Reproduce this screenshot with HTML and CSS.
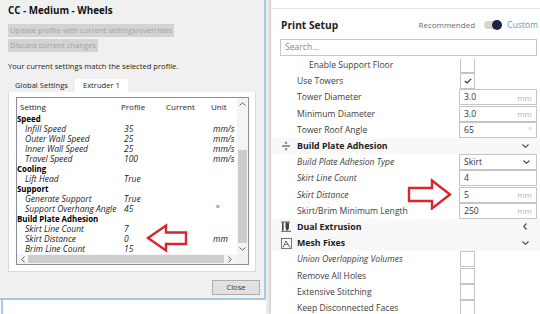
FILE: index.html
```html
<!DOCTYPE html>
<html>
<head>
<meta charset="utf-8">
<link rel="stylesheet" href="styles.css">
</head>
<body>
<div class="screen">
  <div class="left">
    <div class="dlg">
      <div class="title">CC - Medium - Wheels</div>
      <div class="btn btn-wide">Update profile with current settings/overrides</div>
      <div class="btn btn-narrow">Discard current changes</div>
      <div class="msg">Your current settings match the selected profile.</div>
      <div class="tabs">
        <div class="tab">Global Settings</div>
        <div class="tab active">Extruder 1</div>
      </div>
      <div class="tabpanel">
        <div class="table">
          <div class="tmain">
            <div class="thead">
              <span>Setting</span><span>Profile</span><span>Current</span><span>Unit</span>
            </div>
            <div class="tbody">
              <div class="cat">Speed</div>
              <div class="trow"><span>Infill Speed</span><span>35</span><span>mm/s</span></div>
              <div class="trow"><span>Outer Wall Speed</span><span>25</span><span>mm/s</span></div>
              <div class="trow"><span>Inner Wall Speed</span><span>25</span><span>mm/s</span></div>
              <div class="trow"><span>Travel Speed</span><span>100</span><span>mm/s</span></div>
              <div class="cat">Cooling</div>
              <div class="trow"><span>Lift Head</span><span>True</span><span></span></div>
              <div class="cat">Support</div>
              <div class="trow"><span>Generate Support</span><span>True</span><span></span></div>
              <div class="trow"><span>Support Overhang Angle</span><span>45</span><span class="deg">°</span></div>
              <div class="cat">Build Plate Adhesion</div>
              <div class="trow"><span>Skirt Line Count</span><span>7</span><span></span></div>
              <div class="trow"><span>Skirt Distance</span><span>0</span><span>mm</span></div>
              <div class="trow"><span>Brim Line Count</span><span>15</span><span></span></div>
            </div>
          </div>
          <div class="vscroll">
            <div class="sbtn"><svg width="7" height="4" viewBox="0 0 7 4"><polyline points="0.5,3.5 3.5,0.8 6.5,3.5" fill="none" stroke="#606060" stroke-width="1"/></svg></div>
            <div class="vtrack"><div class="vthumb"></div></div>
            <div class="sbtn"><svg width="7" height="4" viewBox="0 0 7 4"><polyline points="0.5,0.5 3.5,3.2 6.5,0.5" fill="none" stroke="#606060" stroke-width="1"/></svg></div>
          </div>
          <div class="hscroll">
            <div class="sbtn h"><svg width="4" height="7" viewBox="0 0 4 7"><polyline points="3.5,0.5 0.8,3.5 3.5,6.5" fill="none" stroke="#606060" stroke-width="1"/></svg></div>
            <div class="hthumb"></div>
            <div class="sbtn h"><svg width="4" height="7" viewBox="0 0 4 7"><polyline points="0.5,0.5 3.2,3.5 0.5,6.5" fill="none" stroke="#606060" stroke-width="1"/></svg></div>
          </div>
          <div class="corner"></div>
        </div>
      </div>
      <div class="footer"><div class="close">Close</div></div>
    </div>
    <div class="below"></div>
  </div>

  <div class="right">
    <div class="panel">
      <div class="topband"></div>
      <div class="ps-head">
        <div class="ps-title">Print Setup</div>
        <div class="mode">
          <span class="rec">Recommended</span>
          <span class="toggle"><span class="knob"></span></span>
          <span class="custom">Custom</span>
        </div>
      </div>
      <div class="search">Search...</div>
      <div class="list">
        <div class="list-inner">
          <div class="row"><span class="label sub">Enable Support Floor</span><span class="check"></span></div>
          <div class="row"><span class="label">Use Towers</span><span class="check"><svg width="8" height="6" viewBox="0 0 8 6"><polyline points="0.8,3 3,5 7.2,0.8" fill="none" stroke="#333" stroke-width="1.2"/></svg></span></div>
          <div class="row"><span class="label">Tower Diameter</span><span class="field"><span>3.0</span><span class="unit">mm</span></span></div>
          <div class="row"><span class="label">Minimum Diameter</span><span class="field"><span>3.0</span><span class="unit">mm</span></span></div>
          <div class="row"><span class="label">Tower Roof Angle</span><span class="field"><span>65</span><span class="unit">°</span></span></div>
          <div class="row cat-row">
            <span class="cicon"><svg width="10" height="10" viewBox="0 0 10 10"><line x1="1" y1="5" x2="9" y2="5" stroke="#555" stroke-width="1.2"/><line x1="5" y1="0.5" x2="5" y2="3" stroke="#555" stroke-width="1"/><line x1="5" y1="7" x2="5" y2="9.5" stroke="#555" stroke-width="1"/><line x1="3.5" y1="2" x2="6.5" y2="2" stroke="#777" stroke-width="0.6"/><line x1="3.5" y1="8" x2="6.5" y2="8" stroke="#777" stroke-width="0.6"/></svg></span>
            <span class="label bold">Build Plate Adhesion</span>
            <span class="chev"><svg width="7" height="4" viewBox="0 0 7 4"><polyline points="0.5,0.5 3.5,3.3 6.5,0.5" fill="none" stroke="#444" stroke-width="1.1"/></svg></span>
          </div>
          <div class="row"><span class="label it">Build Plate Adhesion Type</span><span class="field select"><span>Skirt</span><svg width="7" height="4" viewBox="0 0 7 4"><polyline points="0.5,0.5 3.5,3.3 6.5,0.5" fill="none" stroke="#444" stroke-width="1.1"/></svg></span></div>
          <div class="row"><span class="label it">Skirt Line Count</span><span class="field"><span>4</span></span></div>
          <div class="row"><span class="label it">Skirt Distance</span><span class="field"><span>5</span><span class="unit">mm</span></span></div>
          <div class="row"><span class="label">Skirt/Brim Minimum Length</span><span class="field"><span>250</span><span class="unit">mm</span></span></div>
          <div class="row cat-row">
            <span class="cicon"><svg width="10" height="11" viewBox="0 0 10 11"><rect x="1" y="1.5" width="1.6" height="8" fill="#444"/><path d="M4.5 1.5 H8 V7 L7 9.5 H5.5 L4.5 7 Z" fill="#444"/><line x1="0" y1="10.3" x2="10" y2="10.3" stroke="#444" stroke-width="0.9"/><line x1="0" y1="1" x2="9" y2="1" stroke="#444" stroke-width="0.9"/></svg></span>
            <span class="label bold">Dual Extrusion</span>
            <span class="chev"><svg width="4" height="7" viewBox="0 0 4 7"><polyline points="3.5,0.5 0.7,3.5 3.5,6.5" fill="none" stroke="#444" stroke-width="1.1"/></svg></span>
          </div>
          <div class="row cat-row">
            <span class="cicon"><svg width="11" height="11" viewBox="0 0 11 11"><rect x="0.5" y="0.5" width="10" height="10" fill="none" stroke="#555" stroke-width="0.8"/><polyline points="2,9.5 5,3 9,9.5" fill="none" stroke="#555" stroke-width="0.9"/><line x1="3.3" y1="6.5" x2="7.3" y2="6.5" stroke="#555" stroke-width="0.7"/></svg></span>
            <span class="label bold">Mesh Fixes</span>
            <span class="chev"><svg width="7" height="4" viewBox="0 0 7 4"><polyline points="0.5,0.5 3.5,3.3 6.5,0.5" fill="none" stroke="#444" stroke-width="1.1"/></svg></span>
          </div>
          <div class="row"><span class="label it">Union Overlapping Volumes</span><span class="check"></span></div>
          <div class="row"><span class="label">Remove All Holes</span><span class="check"></span></div>
          <div class="row"><span class="label">Extensive Stitching</span><span class="check"></span></div>
          <div class="row"><span class="label">Keep Disconnected Faces</span><span class="check"></span></div>
        </div>
      </div>
    </div>
  </div>

  <svg class="arrow arrow-left" width="44" height="30" viewBox="145 223 44 30">
    <polygon points="148,238 166,225.5 166,232.5 186,232.5 186,244 166,244 166,250.5" fill="none" stroke="#d8262c" stroke-width="2.4" stroke-linejoin="miter"/>
  </svg>
  <svg class="arrow arrow-right" width="46" height="32" viewBox="406 178 46 32">
    <polygon points="450,194.5 432,180.5 432,188 409,188 409,201 432,201 432,208.5" fill="none" stroke="#d8262c" stroke-width="2.4" stroke-linejoin="miter"/>
  </svg>
</div>
</body>
</html>
```

FILE: styles.css
```css
* { box-sizing: border-box; }
html, body { margin: 0; padding: 0; }
body { width: 540px; height: 314px; overflow: hidden; background: #fff; }

.screen {
  position: relative;
  width: 540px;
  height: 314px;
  display: flex;
  font-family: "Open Sans", "DejaVu Sans", sans-serif;
}

/* ---------- left dialog ---------- */
.left { width: 266px; display: flex; flex-direction: column; }
.dlg {
  width: 266px;
  height: 300px;
  background: #f0f0f0;
  border-right: 2px solid #a8cbe4;
  border-bottom: 2px solid #a8cbe4;
  display: flex;
  flex-direction: column;
  align-items: flex-start;
  padding: 0 0 0 8px;
  font-size: 7.6px;
  color: #1a1a1a;
}
.below { flex: 1; background: #fff; border-left: 2px solid #a8cbe4; margin-left: 1px; }

.title { margin-top: 4px; height: 13px; line-height: 13px; font-weight: 700; font-size: 9.8px; color: #111; }
.btn {
  background: #d3d3d3;
  color: #a3a3a3;
  height: 13px;
  line-height: 13px;
  padding: 0 2px;
  white-space: nowrap;
}
.btn-wide { margin-top: 7px; }
.btn-narrow { margin-top: 2px; }
.msg { margin-top: 8px; height: 13px; line-height: 13px; }

.tabs { margin-top: 6px; height: 13px; display: flex; }
.tab { height: 13px; line-height: 13px; padding: 0 7px; color: #222; }
.tab.active { background: #fff; padding: 0 8px; }

.tabpanel {
  width: 248px;
  height: 180px;
  background: #fff;
  border: 1px solid #dadada;
  border-top: none;
  padding: 5px 0 0 7px;
}

.table {
  width: 233px;
  height: 168px;
  border: 1px solid #8a8f97;
  display: grid;
  grid-template-columns: 220px 11px;
  grid-template-rows: 156px 10px;
  font-size: 8px;
  background: #fff;
}
.tmain { overflow: hidden; }
.thead {
  height: 16px;
  display: grid;
  grid-template-columns: 101px 45px 45px 30px;
  align-items: center;
  padding-left: 3px;
  color: #222;
}
.tbody { height: 140px; overflow: hidden; }
.cat { height: 10px; line-height: 10px; font-weight: 700; color: #000; font-size: 7.9px; }
.trow {
  height: 10px;
  line-height: 10px;
  display: grid;
  grid-template-columns: 107px 89px 24px;
  font-style: italic;
  font-size: 8.5px;
  color: #1a1a1a;
}
.trow span:first-child { padding-left: 8px; white-space: nowrap; }
.trow .deg { padding-left: 3px; }

.vscroll { grid-row: 1; grid-column: 2; background: #f4f4f4; display: flex; flex-direction: column; }
.sbtn { height: 11px; display: flex; align-items: center; justify-content: center; flex: none; }
.vtrack { flex: 1; display: flex; flex-direction: column; justify-content: flex-end; }
.vthumb { height: 93px; margin: 0 1px; background: #cdcdcd; }
.hscroll { grid-row: 2; grid-column: 1; background: #f4f4f4; display: flex; align-items: center; }
.sbtn.h { width: 11px; height: 10px; }
.hthumb { width: 196px; height: 8px; background: #cdcdcd; }
.corner { grid-row: 2; grid-column: 2; background: #f0f0f0; }

.footer { align-self: stretch; display: flex; justify-content: flex-end; padding: 8px 4px 0 0; }
.close {
  width: 48px;
  height: 15px;
  line-height: 13px;
  text-align: center;
  background: #e1e1e1;
  border: 1px solid #adadad;
  color: #333;
  font-size: 7.6px;
}

/* ---------- right panel ---------- */
.right { flex: 1; background: #ededed; padding-left: 5px; }
.panel {
  height: 314px;
  background: #fff;
  box-shadow: -1px 0 3px rgba(0,0,0,0.18);
  display: flex;
  flex-direction: column;
  color: #3d3d3d;
  font-size: 8.6px;
}
.topband { height: 9px; border-bottom: 1px solid #e4e4e4; flex: none; }
.ps-head { height: 29px; display: flex; align-items: center; justify-content: space-between; padding: 0 2px 0 10px; margin-top: 1px; }
.ps-title { font-weight: 700; font-size: 10.2px; color: #222; }
.mode { display: flex; align-items: center; font-size: 8px; }
.rec { color: #6a6a6a; }
.toggle {
  position: relative;
  width: 17px;
  height: 8px;
  margin: 0 6px 0 9px;
  border-radius: 4px;
  background: #d5d5d5;
}
.knob {
  position: absolute;
  right: -1px;
  top: -1px;
  width: 10px;
  height: 10px;
  border-radius: 50%;
  background: #1e2346;
}
.custom { color: #41a6c8; font-size: 8.6px; }

.search {
  margin: 0 3px 0 9px;
  height: 17px;
  border: 1px solid #c6c6c6;
  padding-left: 4px;
  line-height: 15px;
  color: #8a8a8a;
  font-size: 8.6px;
  flex: none;
}
.list { flex: 1; overflow: hidden; margin-top: 3px; }
.list-inner { margin-top: -2px; }
.row { height: 16.2px; display: flex; align-items: center; padding-right: 3px; }
.label { flex: 1; padding-left: 26px; white-space: nowrap; }
.label.sub { padding-left: 38px; }
.label.it { font-style: italic; }
.label.bold { font-weight: 700; padding-left: 4px; color: #222; font-size: 8.8px; }
.cat-row { background: #f8f8f8; }
.cicon { width: 22px; padding-left: 10px; display: flex; align-items: center; }
.chev { width: 20px; display: flex; align-items: center; justify-content: center; padding-right: 4px; }

.check {
  width: 15px;
  height: 16px;
  border: 1px solid #c4c4c4;
  background: #fff;
  margin-right: 62px;
  display: flex;
  align-items: center;
  justify-content: center;
}
.field {
  width: 78px;
  height: 16px;
  border: 1px solid #c4c4c4;
  display: flex;
  align-items: center;
  justify-content: space-between;
  padding: 0 4px 0 4px;
  color: #333;
}
.unit { color: #b3b3b3; font-size: 8px; }
.select svg { margin-right: 2px; }

/* ---------- overlays ---------- */
.arrow { position: absolute; }
.arrow-left { left: 145px; top: 223px; }
.arrow-right { left: 406px; top: 178px; }
```
